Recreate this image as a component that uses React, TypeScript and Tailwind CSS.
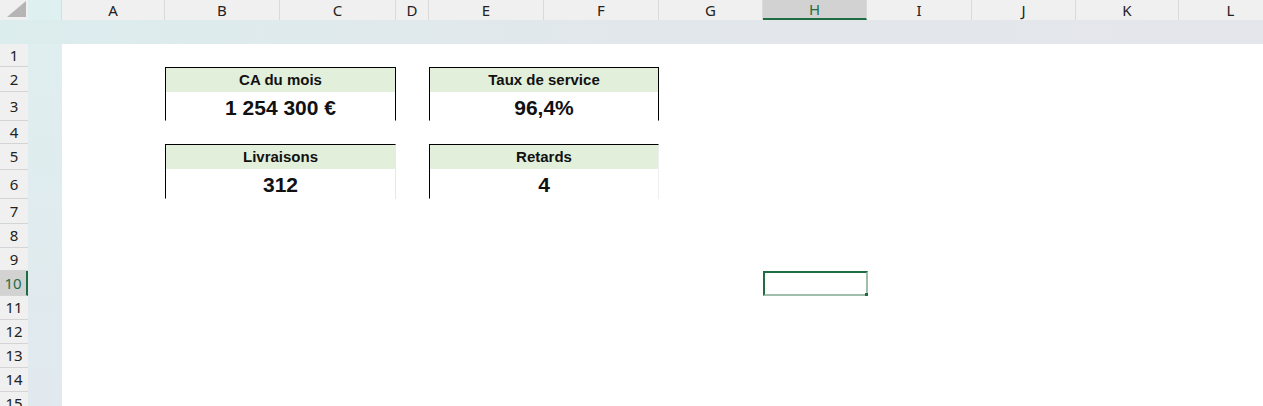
const COLUMNS = [
  { label: 'A', w: 'w-[103px]' },
  { label: 'B', w: 'w-[115px]' },
  { label: 'C', w: 'w-[116px]' },
  { label: 'D', w: 'w-[33px]' },
  { label: 'E', w: 'w-[115px]' },
  { label: 'F', w: 'w-[115px]' },
  { label: 'G', w: 'w-[104px]' },
  { label: 'H', w: 'w-[104px]', active: true },
  { label: 'I', w: 'w-[105px]' },
  { label: 'J', w: 'w-[104px]' },
  { label: 'K', w: 'w-[103px]' },
  { label: 'L', w: 'w-[104px]' },
];

const ROWS = [
  { n: 1, h: 'h-[23px]' },
  { n: 2, h: 'h-[25px]' },
  { n: 3, h: 'h-[29px]' },
  { n: 4, h: 'h-[23px]' },
  { n: 5, h: 'h-[26px]' },
  { n: 6, h: 'h-[29px]' },
  { n: 7, h: 'h-[25px]' },
  { n: 8, h: 'h-[24px]' },
  { n: 9, h: 'h-[23px]' },
  { n: 10, h: 'h-[25px]', active: true },
  { n: 11, h: 'h-[24px]' },
  { n: 12, h: 'h-[24px]' },
  { n: 13, h: 'h-[24px]' },
  { n: 14, h: 'h-[24px]' },
  { n: 15, h: 'h-[24px]' },
];

const UI_FONT = 'font-["Segoe_UI","Noto_Sans",sans-serif]';

type Kpi = { title: string; value: string; place: string; edges: string };

const KPIS: Kpi[] = [
  { title: 'CA du mois', value: '1 254 300 €', place: 'col-start-2 col-span-2 row-start-2 row-span-2', edges: 'border-r-black' },
  { title: 'Taux de service', value: '96,4%', place: 'col-start-5 col-span-2 row-start-2 row-span-2', edges: 'border-r-black' },
  { title: 'Livraisons', value: '312', place: 'col-start-2 col-span-2 row-start-5 row-span-2', edges: 'border-r-[#e8e8e8]' },
  { title: 'Retards', value: '4', place: 'col-start-5 col-span-2 row-start-5 row-span-2', edges: 'border-r-[#eeeeee]' },
];

function KpiCard({ kpi }: { kpi: Kpi }) {
  return (
    <div
      className={`${kpi.place} flex flex-col border-t border-l border-r border-t-black border-l-black ${kpi.edges} border-b border-b-[#e6e6e6] font-["Liberation_Sans",Arial,sans-serif] text-[#111]`}
    >
      <div className="flex-[25] flex items-center justify-center bg-[#e2efda] text-[15px] font-bold pt-px">
        {kpi.title}
      </div>
      <div className="flex-[28] flex items-center justify-center bg-white text-[21px] font-bold">
        {kpi.value}
      </div>
    </div>
  );
}

export default function App() {
  return (
    <div className="w-[1263px] h-[406px] overflow-hidden bg-white flex flex-col">
      {/* column headers */}
      <div className="flex h-[20px] shrink-0">
        <div className="w-[28px] shrink-0 bg-[#f0f0f0] relative">
          <svg width="28" height="20" className="absolute inset-0">
            <polygon points="7,17 26,1 26,17" fill="#b5b5b5" />
          </svg>
        </div>
        <div className="w-[34px] shrink-0 bg-[#dff0f0] border-r border-[#d6dede]" />
        {COLUMNS.map((c) => (
          <div
            key={c.label}
            className={`${c.w} shrink-0 flex items-center justify-center text-[15px] ${UI_FONT} ${
              c.active
                ? 'bg-[#d2d2d2] text-[#1e6e42] border-b-2 border-b-[#1e6e42]'
                : 'bg-[#f0f0f0] text-[#222]'
            } border-r border-r-[#dadada]`}
          >
            {c.label}
          </div>
        ))}
      </div>

      {/* tinted band */}
      <div className="h-[24px] shrink-0 bg-gradient-to-r from-[#dcedee] via-[#e2e7eb] to-[#e4e6eb]" />

      <div className="flex flex-1 min-h-0">
        {/* row headers */}
        <div className="w-[28px] shrink-0 flex flex-col">
          {ROWS.map((r) => (
            <div
              key={r.n}
              className={`${r.h} shrink-0 flex items-center justify-center text-[15px] ${UI_FONT} border-b border-b-[#d4d4d4] ${
                r.active
                  ? 'bg-[#d2d2d2] text-[#1e6e42] border-r-2 border-r-[#1e6e42]'
                  : 'bg-[#f0f0f0] text-[#222]'
              }`}
            >
              {r.n}
            </div>
          ))}
        </div>

        {/* side strip */}
        <div className="w-[34px] shrink-0 bg-gradient-to-b from-[#dfeeef] to-[#e1e9ee]" />

        {/* sheet */}
        <div className="grid grid-cols-[103px_115px_116px_33px_115px_115px_104px_104px_105px_104px_103px_104px] grid-rows-[23px_25px_29px_23px_26px_29px_25px_24px_23px_25px_24px_24px_24px_24px_24px] bg-white">
          {KPIS.map((k) => (
            <KpiCard key={k.title} kpi={k} />
          ))}
          <div className="col-start-8 row-start-10 -mr-px relative border-t-2 border-l-2 border-t-[#1e6e42] border-l-[#1e6e42] border-r-2 border-b-2 border-r-[#9fbfac] border-b-[#9fbfac]">
            <span className="absolute -right-[2px] -bottom-[2px] w-[3px] h-[3px] bg-[#1e6e42]" />
          </div>
        </div>
      </div>
    </div>
  );
}
